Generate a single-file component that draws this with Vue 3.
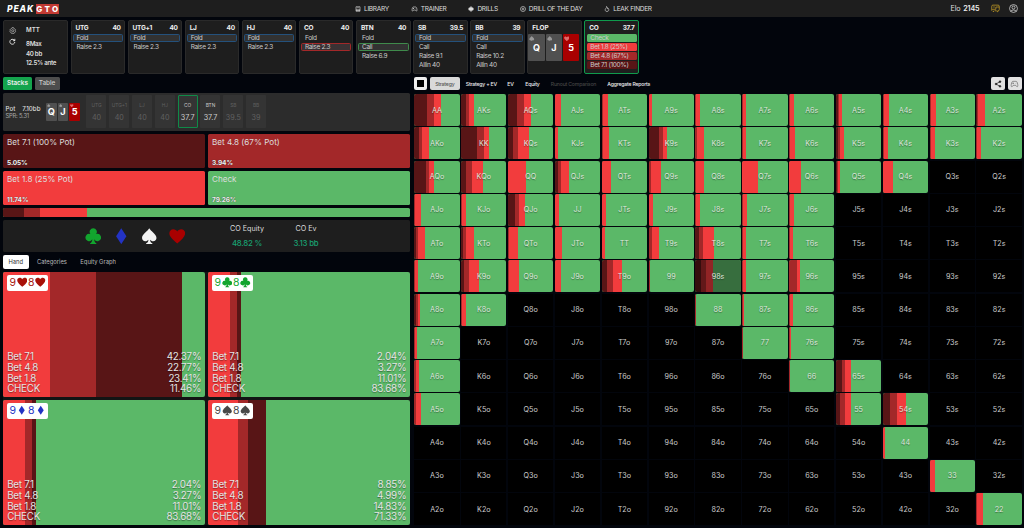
<template>
  <div class="app">
    <header class="topbar">
      <div class="logo">
        <span class="logo-peak">PEAK</span>
        <span v-for="l in 'GTO'" :key="l" class="logo-box">{{ l }}</span>
      </div>
      <nav class="nav">
        <a v-for="n in nav" :key="n.label" :class="n.icon">
          <svg viewBox="0 0 24 24"><path :d="icons[n.icon]" /></svg>
          <span>{{ n.label }}</span>
        </a>
      </nav>
      <div class="account">
        <span class="elo">Elo <b>2145</b></span>
        <svg class="chat" viewBox="0 0 24 24"><path :d="icons.chat" /></svg>
        <svg class="user" viewBox="0 0 24 24"><path :d="icons.user" /></svg>
      </div>
    </header>

    <section class="history">
      <div class="panel setup">
        <div class="setup-icons">
          <svg viewBox="0 0 24 24"><path :d="icons.gear" /></svg>
          <svg viewBox="0 0 24 24" class="reload"><path :d="icons.reload" /></svg>
        </div>
        <div class="setup-text">
          <p>MTT</p>
          <p>8Max</p>
          <p>40 bb</p>
          <p>12.5% ante</p>
        </div>
      </div>
      <div v-for="p in players" :key="p.pos" class="panel player">
        <div class="player-head"><b>{{ p.pos }}</b><b>{{ p.stack }}</b></div>
        <div v-for="(a, i) in p.actions" :key="a" class="act" :class="i === p.picked && p.color">{{ a }}</div>
      </div>
      <div class="panel player flop">
        <div class="player-head"><b>FLOP</b></div>
        <div class="board">
          <div v-for="c in board" :key="c.rank" class="board-card" :class="c.suit">
            <svg viewBox="0 0 24 24"><path :d="suits[c.suit]" /></svg>
            <b>{{ c.rank }}</b>
          </div>
        </div>
      </div>
      <div class="panel player current">
        <div class="player-head"><b>CO</b><b>37.7</b></div>
        <div class="act check">Check</div>
        <div class="act small">Bet 1.8 (25%)</div>
        <div class="act mid">Bet 4.8 (67%)</div>
        <div class="act big">Bet 7.1 (100%)</div>
      </div>
    </section>

    <main class="main">
      <section class="left">
        <div class="mode">
          <button class="on">Stacks</button>
          <button>Table</button>
        </div>
        <div class="pot">
          <div class="pot-text">
            <p><span>Pot</span><span>7.10bb</span></p>
            <p class="spr">SPR: 5.31</p>
          </div>
          <div class="board mini">
            <div v-for="c in board" :key="c.rank" class="board-card" :class="c.suit">
              <svg viewBox="0 0 24 24"><path :d="suits[c.suit]" /></svg>
              <b>{{ c.rank }}</b>
            </div>
          </div>
          <div class="seats">
            <div v-for="s in seats" :key="s.pos" class="seat" :class="s.state">
              <span class="seat-pos">{{ s.pos }}</span>
              <span>{{ s.stack }}</span>
            </div>
          </div>
        </div>
        <div class="options">
          <div v-for="o in options" :key="o.label" class="option" :class="o.kind">
            <span>{{ o.label }}</span>
            <b>{{ o.pct }}</b>
          </div>
        </div>
        <div class="ratio">
          <i v-for="r in ratio" :key="r.kind" :class="r.kind" :style="{ width: r.w + '%' }"></i>
        </div>
        <div class="summary">
          <div class="suits">
            <svg v-for="s in ['club', 'diamond', 'spade', 'heart']" :key="s" :class="s" viewBox="0 0 24 24">
              <path :d="suits[s]" />
            </svg>
          </div>
          <div class="stat"><span>CO Equity</span><em>48.82 %</em></div>
          <div class="stat ev"><span>CO Ev</span><em>3.13 bb</em></div>
        </div>
        <div class="hand-tabs">
          <button class="on">Hand</button>
          <button>Categories</button>
          <button>Equity Graph</button>
        </div>
        <div class="hands">
          <div v-for="h in hands" :key="h.suit" class="hand">
            <div class="fill">
              <i class="small" :style="{ width: h.pct[2] + '%' }"></i>
              <i class="mid" :style="{ width: h.pct[1] + '%' }"></i>
              <i class="big" :style="{ width: h.pct[0] + '%' }"></i>
            </div>
            <div class="tag" :class="h.suit">
              <template v-for="r in '98'" :key="r">
                <span>{{ r }}</span>
                <svg viewBox="0 0 24 24"><path :d="suits[h.suit]" /></svg>
              </template>
            </div>
            <ul>
              <li v-for="(l, i) in ['Bet 7.1', 'Bet 4.8', 'Bet 1.8', 'CHECK']" :key="l">
                <span>{{ l }}</span><span>{{ h.pct[i].toFixed(2) }}%</span>
              </li>
            </ul>
          </div>
        </div>
      </section>

      <section class="right">
        <div class="view-tabs">
          <button class="square"><i></i></button>
          <button class="on">Strategy</button>
          <button class="t1">Strategy + EV</button>
          <button class="t2">EV</button>
          <button class="t3">Equity</button>
          <button class="t4 off">Runout Comparison</button>
          <button class="t5">Aggregate Reports</button>
          <button class="tool share">
            <svg viewBox="0 0 24 24">
              <path d="M18 5L6 12 18 19" />
              <circle cx="18" cy="5" r="2.500" />
              <circle cx="6" cy="12" r="2.500" />
              <circle cx="18" cy="19" r="2.500" />
            </svg>
          </button>
          <button class="tool pad"><svg viewBox="0 0 24 24"><path :d="icons.trainer" /></svg></button>
        </div>
        <div class="matrix">
          <div v-for="c in cells" :key="c.name" class="cell" :class="{ live: c.mix, dim: c.name === '98s' }">
            <div v-if="c.mix" class="fill">
              <i class="big" :style="{ width: c.mix[0] + '%' }"></i>
              <i class="mid" :style="{ width: c.mix[1] + '%' }"></i>
              <i class="small" :style="{ width: c.mix[2] + '%' }"></i>
            </div>
            <span>{{ c.name }}</span>
          </div>
        </div>
      </section>
    </main>
  </div>
</template>

<script setup>
const suits = {
  heart:
    "M12 22.5C5 16.5 .5 12.5 .5 7.7 .5 4.3 3 1.8 6.3 1.8 8.7 1.8 10.9 3.1 12 5.2 13.1 3.1 15.3 1.8 17.7 1.8 21 1.8 23.5 4.3 23.5 7.7 23.5 12.5 19 16.5 12 22.5z",
  diamond: "M12 .5L19.5 12 12 23.5 4.5 12z",
  spade:
    "M12 .5C10 4.5 1.5 9 1.5 14.5 1.5 17.3 3.6 19.2 6.3 19.2 8.2 19.2 9.8 18.3 10.8 17 10.6 19.5 9.8 21.5 7.5 22.3V23.5H16.5V22.3C14.2 21.5 13.4 19.5 13.2 17 14.2 18.3 15.8 19.2 17.7 19.2 20.4 19.2 22.5 17.3 22.5 14.5 22.5 9 14 4.5 12 .5z",
  club:
    "M12 .5a5.2 5.2 0 0 1 4.2 8.3A5.3 5.3 0 1 1 13.4 16.5C13.6 19.5 14.5 21.5 16.5 22.3V23.5H7.5V22.3C9.5 21.5 10.4 19.5 10.6 16.5A5.3 5.3 0 1 1 7.8 8.8 5.2 5.2 0 0 1 12 .5z",
};

const icons = {
  library: "M4 3H20V21H4zM4 15H20M4 18H20M9 7H15",
  trainer: "M7 4H17C20 4 22 12 22 17 22 21 19 21 17 18L16 16H8L7 18C5 21 2 21 2 17 2 12 4 4 7 4zM8 8V12M6 10H10M15 11V11.5M17.5 9V9.5",
  drills: "M12 2L15 7 21 8 20 12 21 16 15 17 12 22 9 17 3 16 4 12 3 8 9 7z",
  daily: "M12 2A10 10 0 1 0 12 22A10 10 0 1 0 12 2zM12 8.5A3.5 3.5 0 1 0 12 15.5A3.5 3.5 0 1 0 12 8.5z",
  leak: "M10 2C11 6 9 7 7 10 3 14 4 22 12 22S21 13 17 9C16 11 15 11 14 11 15 7 13 3 10 2z",
  chat: "M5 3H19Q22 3 22 6V15Q22 18 19 18H18V21L14 18H10M5 3Q2 3 2 6V17L5 14H13V8H22M6 18V21L9 18M6 8H10",
  user: "M12 1.5A10.5 10.5 0 1 0 12 22.5A10.5 10.5 0 1 0 12 1.5zM12 5.5A4 4 0 1 0 12 13.5A4 4 0 1 0 12 5.5zM5 19C7 15 17 15 19 19",
  gear: "M9.5 2H14.5L15.5 5 18.5 6 21 9 20 12 21 15 18.5 18 15.5 19 14.5 22H9.5L8.5 19 5.5 18 3 15 4 12 3 9 5.5 6 8.5 5zM12 8.5A3.5 3.5 0 1 0 12 15.5A3.5 3.5 0 1 0 12 8.5z",
  reload: "M20 13A8.5 8.5 0 1 1 17 5.5L20 8M20 2V8.5H13.5",
};

const nav = [
  { icon: "library", label: "LIBRARY" },
  { icon: "trainer", label: "TRAINER" },
  { icon: "drills", label: "DRILLS" },
  { icon: "daily", label: "DRILL OF THE DAY" },
  { icon: "leak", label: "LEAK FINDER" },
];

const players = [
  { pos: "UTG", stack: "40", actions: ["Fold", "Raise 2.3"], picked: 0, color: "blue" },
  { pos: "UTG+1", stack: "40", actions: ["Fold", "Raise 2.3"], picked: 0, color: "blue" },
  { pos: "LJ", stack: "40", actions: ["Fold", "Raise 2.3"], picked: 0, color: "blue" },
  { pos: "HJ", stack: "40", actions: ["Fold", "Raise 2.3"], picked: 0, color: "blue" },
  { pos: "CO", stack: "40", actions: ["Fold", "Raise 2.3"], picked: 1, color: "red" },
  { pos: "BTN", stack: "40", actions: ["Fold", "Call", "Raise 6.9"], picked: 1, color: "green" },
  { pos: "SB", stack: "39.5", actions: ["Fold", "Call", "Raise 9.1", "Allin 40"], picked: 0, color: "blue" },
  { pos: "BB", stack: "39", actions: ["Fold", "Call", "Raise 10.2", "Allin 40"], picked: 0, color: "blue" },
];

const board = [
  { rank: "Q", suit: "spade" },
  { rank: "J", suit: "spade" },
  { rank: "5", suit: "heart" },
];

const seats = [
  { pos: "UTG", stack: "40" },
  { pos: "UTG+1", stack: "40" },
  { pos: "LJ", stack: "40" },
  { pos: "HJ", stack: "40" },
  { pos: "CO", stack: "37.7", state: "active" },
  { pos: "BTN", stack: "37.7", state: "in" },
  { pos: "SB", stack: "39.5" },
  { pos: "BB", stack: "39" },
];

const options = [
  { label: "Bet 7.1 (100% Pot)", pct: "5.05%", kind: "big" },
  { label: "Bet 4.8 (67% Pot)", pct: "3.94%", kind: "mid" },
  { label: "Bet 1.8 (25% Pot)", pct: "11.74%", kind: "small" },
  { label: "Check", pct: "79.26%", kind: "check" },
];

const ratio = [
  { kind: "big", w: 5.05 },
  { kind: "mid", w: 3.94 },
  { kind: "small", w: 11.74 },
];

const hands = [
  { suit: "heart", pct: [42.37, 22.77, 23.41, 11.46] },
  { suit: "club", pct: [2.04, 3.27, 11.01, 83.68] },
  { suit: "diamond", pct: [2.04, 3.27, 11.01, 83.68] },
  { suit: "spade", pct: [8.85, 4.99, 14.83, 71.33] },
];

// pot, two thirds, quarter; the rest is check
const mixes = {
  AA: [28, 15, 15], AKs: [10, 7, 12], AQs: [20, 15, 15], AJs: [0, 1, 13], ATs: [0, 2, 13],
  A9s: [0, 1, 7], A8s: [0, 2, 8], A7s: [0, 1, 7], A6s: [0, 2, 9], A5s: [4, 3, 6],
  A4s: [0, 3, 11], A3s: [0, 2, 13], A2s: [1, 3, 14],
  AKo: [10, 6, 16], KK: [35, 15, 11], KQs: [10, 12, 25], KJs: [0, 1, 7], KTs: [0, 2, 14],
  K9s: [23, 9, 8], K8s: [0, 4, 16], K7s: [0, 1, 8], K6s: [0, 2, 10], K5s: [5, 4, 9],
  K4s: [0, 2, 10], K3s: [0, 3, 9], K2s: [0, 1, 10],
  AQo: [25, 8, 10], KQo: [11, 13, 25], QQ: [0, 0, 39], QJs: [7, 6, 18], QTs: [0, 1, 19],
  Q9s: [1, 5, 21], Q8s: [0, 2, 18], Q7s: [0, 0, 34], Q6s: [0, 0, 26], Q5s: [2, 2, 5], Q4s: [0, 0, 23],
  AJo: [0, 1, 13], KJo: [0, 1, 10], QJo: [15, 10, 12], JJ: [0, 0, 9], JTs: [0, 0, 9],
  J9s: [0, 1, 9], J8s: [0, 2, 8], J7s: [0, 1, 9], J6s: [0, 1, 10],
  ATo: [4, 5, 15], KTo: [3, 8, 18], QTo: [0, 2, 21], JTo: [0, 1, 14], TT: [0, 0, 7],
  T9s: [2, 5, 17], T8s: [9, 8, 25], T7s: [0, 2, 7], T6s: [0, 2, 6],
  A9o: [0, 1, 7], K9o: [7, 11, 22], Q9o: [0, 3, 21], J9o: [0, 1, 13], T9o: [11, 13, 20],
  99: [0, 1, 0], "98s": [13, 10, 15], "97s": [0, 2, 7], "96s": [0, 17, 8],
  A8o: [3, 5, 4], K8o: [0, 1, 10], 88: [0, 1, 0], "87s": [0, 1, 4], "86s": [0, 2, 6],
  A7o: [0, 2, 5], 77: [0, 1, 0], "76s": [0, 1, 3],
  A6o: [0, 3, 7], 66: [0, 1, 0], "65s": [13, 8, 13],
  A5o: [0, 3, 12], 55: [9, 10, 15], "54s": [15, 16, 20],
  44: [0, 0, 6], 33: [0, 1, 10], 22: [0, 1, 13],
};

const ranks = "AKQJT98765432";
const cells = [];
for (let r = 0; r < 13; r++) {
  for (let c = 0; c < 13; c++) {
    let name = ranks[r] + ranks[c];
    if (c > r) name += "s";
    if (c < r) name = ranks[c] + ranks[r] + "o";
    cells.push({ name, mix: mixes[name] });
  }
}
</script>

<style>
body {
  background: #02050c;
  overflow: hidden;
}
</style>

<style scoped>
* {
  box-sizing: border-box;
}
p,
ul {
  margin: 0;
  padding: 0;
  list-style: none;
}
svg {
  display: block;
  flex: none;
}
button {
  font: inherit;
  letter-spacing: inherit;
  color: inherit;
  border: 0;
  padding: 0;
  background: none;
  white-space: nowrap;
}
.app {
  width: 1024px;
  height: 528px;
  overflow: hidden;
  font-family: Inter, "Liberation Sans", sans-serif;
  font-size: 6.5px;
  color: #ddd;
  background: #02050c;
}
.big {
  background: #581516;
}
.mid {
  background: #a32829;
}
.small {
  background: #f23c3d;
}
.check {
  background: #5bb868;
}

.topbar {
  display: flex;
  align-items: center;
  height: 17px;
  background: #1e1e1e;
}
.logo {
  display: flex;
  align-items: center;
  width: 355px;
  padding: 1px 0 0 7px;
  color: #fff;
  font-weight: 800;
}
.logo-peak {
  width: 28.5px;
  font-size: 8.5px;
  font-style: italic;
  letter-spacing: 0.9px;
}
.logo-box {
  width: 7.4px;
  height: 10px;
  margin-right: 0.6px;
  background: #c23a33;
  font-size: 8px;
  line-height: 10px;
  text-align: center;
}
.nav {
  display: flex;
  flex: 1;
  gap: 22px;
}
.nav a {
  display: flex;
  align-items: center;
  gap: 3px;
  padding-top: 1px;
  font-size: 6.6px;
  letter-spacing: -0.34px;
}
.nav svg {
  width: 6px;
  height: 6px;
  fill: none;
  stroke: #ddd;
  stroke-width: 2.5;
}
.nav .drills svg {
  fill: #ddd;
}
.nav .trainer svg {
  width: 7px;
}
.account {
  display: flex;
  align-items: center;
  padding-right: 6px;
}
.elo {
  margin-right: 11px;
  font-size: 7.2px;
  letter-spacing: -0.15px;
}
.account b {
  margin-left: 1px;
  font-weight: 600;
  color: #eee;
}
.account svg {
  width: 9px;
  height: 9px;
  fill: none;
  stroke: #ddd;
  stroke-width: 2;
}
.account .chat {
  margin-right: 9.5px;
  stroke: #c79f27;
}

.history {
  display: flex;
  gap: 2.5px;
  height: 60px;
  padding: 3px 0 3px 3px;
}
.panel {
  flex: none;
  border: 1px solid #2a2a2a;
  border-radius: 2px;
  background: #1e1e1e;
}
.setup {
  display: flex;
  width: 65px;
}
.setup-icons {
  width: 22px;
  padding: 5.5px 0 0 5px;
}
.setup-icons svg {
  width: 7.5px;
  height: 7.5px;
  margin-bottom: 4px;
  fill: none;
  stroke: #ccc;
  stroke-width: 2;
}
.setup-icons .reload {
  width: 7px;
  stroke: #fff;
  stroke-width: 2.8;
}
.setup-text {
  padding-top: 4px;
  font-size: 6.2px;
  font-weight: 600;
  line-height: 9.8px;
  letter-spacing: -0.3px;
}
.setup-text p:first-child {
  margin-bottom: 4px;
  letter-spacing: 0;
}
.player {
  width: 54.6px;
  padding: 2.5px 1px 0;
}
.player-head {
  display: flex;
  justify-content: space-between;
  padding: 0 2.5px 0 3px;
  margin-bottom: 1px;
  font-size: 6.5px;
  line-height: 9px;
  letter-spacing: -0.3px;
  color: #eee;
}
.act {
  height: 8px;
  margin-bottom: 1.2px;
  padding-left: 3px;
  border: 0.5px solid transparent;
  border-radius: 1.5px;
  font-size: 6.5px;
  line-height: 6px;
  letter-spacing: -0.32px;
  white-space: nowrap;
  color: #ccc;
}
.act.blue {
  border-color: #24517c;
  background: #323232;
}
.act.red {
  border-color: #a32829;
  background: #3a3234;
}
.act.green {
  border-color: #3f8a4b;
  background: #323232;
}
.board {
  display: flex;
  gap: 0.8px;
}
.board-card {
  position: relative;
  width: 16.5px;
  height: 27.5px;
  border-radius: 1px;
  background: #505050;
  color: #fff;
  font-size: 9px;
  line-height: 27px;
  text-align: center;
}
.board-card.heart {
  background: #a90000;
}
.board-card svg {
  position: absolute;
  left: 1px;
  top: 2px;
  width: 5.5px;
  height: 5.5px;
  fill: #999;
}
.board-card.heart svg {
  fill: #e06a6a;
}
.flop {
  padding-left: 0;
}
.flop .player-head {
  padding-left: 4px;
  letter-spacing: 0;
}
.current {
  border-color: #0f9a4c;
}
.current .act {
  margin-left: 0.5px;
  padding-left: 2.5px;
}

.main {
  display: flex;
  gap: 4px;
  padding-left: 3px;
}
.left {
  width: 407.3px;
}
.mode {
  display: flex;
  gap: 2.5px;
  height: 12.5px;
  margin-bottom: 3px;
}
.mode button {
  width: 25px;
  border-radius: 1.5px;
  background: #4d4d4d;
  color: #ccc;
  font-size: 6.4px;
  font-weight: 500;
}
.mode .on {
  width: 29px;
  background: #14a44d;
  color: #eee;
  font-weight: 600;
}
.pot {
  display: flex;
  align-items: center;
  height: 38px;
  margin-bottom: 3px;
  border-radius: 1.5px;
  background: #2c2c2c;
}
.pot-text {
  width: 43px;
  padding-left: 2.5px;
  font-size: 6.2px;
  line-height: 7px;
}
.pot-text p:first-child {
  display: flex;
  justify-content: space-between;
  width: 35px;
  font-weight: 500;
}
.pot-text .spr {
  font-size: 5.8px;
  letter-spacing: -0.2px;
  color: #aaa;
}
.mini .board-card {
  width: 10.8px;
  height: 18px;
  font-size: 9.2px;
  line-height: 18px;
}
.mini .board-card svg {
  top: 1px;
  width: 3.5px;
  height: 3.5px;
}
.seats {
  display: flex;
  gap: 2.8px;
  margin-left: 6.5px;
}
.seat {
  display: flex;
  flex-direction: column;
  align-items: center;
  width: 20px;
  height: 33px;
  padding-top: 6px;
  border-radius: 1px;
  background: #343434;
  color: #606060;
  font-size: 7.2px;
  line-height: 8px;
}
.seat-pos {
  margin-bottom: 5px;
  font-size: 4.8px;
}
.seat.active {
  padding-top: 5px;
  border: 1px solid #0f8a48;
  color: #ccc;
}
.seat.in {
  color: #ccc;
}
.options {
  display: grid;
  grid-template-columns: 1fr 1fr;
  gap: 2.8px;
  margin-bottom: 2.8px;
}
.option {
  display: flex;
  flex-direction: column;
  justify-content: space-between;
  height: 34.5px;
  padding: 3px 4px 1.5px;
  border-radius: 1.5px;
  font-size: 8.1px;
  line-height: 10px;
}
.option b {
  font-size: 6.5px;
  line-height: 8px;
  letter-spacing: -0.1px;
  color: #eee;
  text-shadow: 0 0 1px #333;
}
.ratio {
  display: flex;
  height: 8.5px;
  margin-bottom: 3px;
  border-radius: 1.5px;
  overflow: hidden;
  background: #5bb868;
}
.summary {
  display: flex;
  height: 32.5px;
  margin-bottom: 2.5px;
  border-radius: 1.5px;
  background: #1e1e1e;
}
.suits {
  display: flex;
  gap: 11.5px;
  width: 227px;
  padding: 8px 0 0 81.5px;
}
.suits svg {
  width: 16.5px;
  height: 16.5px;
}
.suits .club {
  fill: #12a52e;
}
.suits .diamond {
  fill: #2333c4;
}
.suits .spade {
  fill: #f2f2f2;
}
.suits .heart {
  fill: #a90000;
}
.stat {
  display: flex;
  flex-direction: column;
  align-items: center;
  width: 34px;
  padding-top: 4px;
  white-space: nowrap;
  font-size: 7.2px;
  line-height: 9px;
}
.stat em {
  margin-top: 6px;
  font-size: 7.8px;
  font-style: normal;
  font-weight: 500;
  letter-spacing: -0.2px;
  color: #18a272;
}
.stat.ev {
  margin-left: 25px;
}
.hand-tabs {
  display: flex;
  gap: 8.5px;
  height: 14px;
  margin-bottom: 3px;
  font-size: 5.8px;
  color: #bbb;
}
.hand-tabs .on {
  width: 25.5px;
  border-radius: 2px;
  background: #fff;
  color: #333;
}
.hand-tabs button + button {
  margin-right: 5px;
}
.hands {
  display: grid;
  grid-template-columns: 1fr 1fr;
  gap: 3px 2.8px;
  background: #121414;
}
.hand {
  position: relative;
  height: 125px;
  border-radius: 2px;
  overflow: hidden;
  background: #5bb868;
}
.fill {
  position: absolute;
  inset: 0;
  display: flex;
}
.fill i,
.ratio i {
  flex: none;
}
.tag {
  position: absolute;
  left: 4px;
  top: 3px;
  display: flex;
  align-items: center;
  width: 41px;
  height: 16px;
  padding-left: 2.5px;
  border-radius: 2px;
  background: #fff;
  font-size: 10.5px;
}
.tag span {
  width: 7px;
}
.tag svg {
  width: 10.5px;
  height: 10.5px;
  margin-right: 1px;
  fill: currentColor;
}
.tag.heart {
  color: #a81108;
}
.tag.club {
  color: #12a52e;
}
.tag.diamond {
  color: #2333c4;
}
.tag.diamond svg {
  width: 9.5px;
  margin: 0 1.5px 0 0.5px;
}
.tag.spade {
  color: #484848;
}
.hand ul {
  position: absolute;
  left: 4.2px;
  right: 4px;
  bottom: 1.6px;
  font-size: 9.8px;
  line-height: 10.65px;
  letter-spacing: -0.25px;
  color: #e4e4e4;
  text-shadow: 0 0.5px 1px rgba(0, 0, 0, 0.4);
}
.hand li {
  display: flex;
  justify-content: space-between;
}

.right {
  width: 607.5px;
}
.view-tabs {
  display: flex;
  height: 13px;
  margin-bottom: 4px;
  font-size: 5.2px;
  font-weight: 500;
  letter-spacing: -0.22px;
  color: #eee;
}
.view-tabs button {
  flex: none;
  text-align: left;
}
.view-tabs .square {
  width: 12.5px;
  padding: 2.7px;
  margin-right: 3px;
  border-radius: 2px;
  background: #eee;
}
.square i {
  display: block;
  height: 7.5px;
  background: #000;
}
.view-tabs .on {
  width: 30px;
  margin-right: 6px;
  border-radius: 2px;
  background: #d9d9d9;
  color: #555;
  text-align: center;
}
.t1 {
  width: 41.5px;
}
.t2 {
  width: 18px;
}
.t3 {
  width: 25.5px;
}
.t4 {
  width: 56.5px;
}
.t4.off {
  color: #444;
}
.view-tabs .t5 {
  flex: 1;
}
.view-tabs .tool {
  display: flex;
  align-items: center;
  justify-content: center;
  width: 14px;
  margin-left: 3px;
  border-radius: 2px;
  background: #e2e2e2;
}
.tool svg {
  width: 8px;
  height: 8px;
  fill: none;
  stroke: #222;
  stroke-width: 2.2;
}
.share circle {
  fill: #222;
}
.tool.pad svg {
  width: 9px;
  stroke: #666;
  stroke-width: 2;
}
.matrix {
  display: grid;
  grid-template-columns: repeat(13, 1fr);
  grid-auto-rows: 32px;
  gap: 1.27px 1.5px;
}
.cell {
  position: relative;
  display: flex;
  align-items: center;
  justify-content: center;
  background: #000;
  font-size: 7.2px;
  color: #ccc;
}
.cell span {
  position: relative;
}
.cell.live {
  border-radius: 2px;
  overflow: hidden;
  background: #5bb868;
  color: #dde6dd;
  text-shadow: 0 0.5px 1px rgba(0, 0, 0, 0.4);
}
.cell.dim .fill {
  background: #5bb868;
  filter: brightness(0.6);
}
</style>
